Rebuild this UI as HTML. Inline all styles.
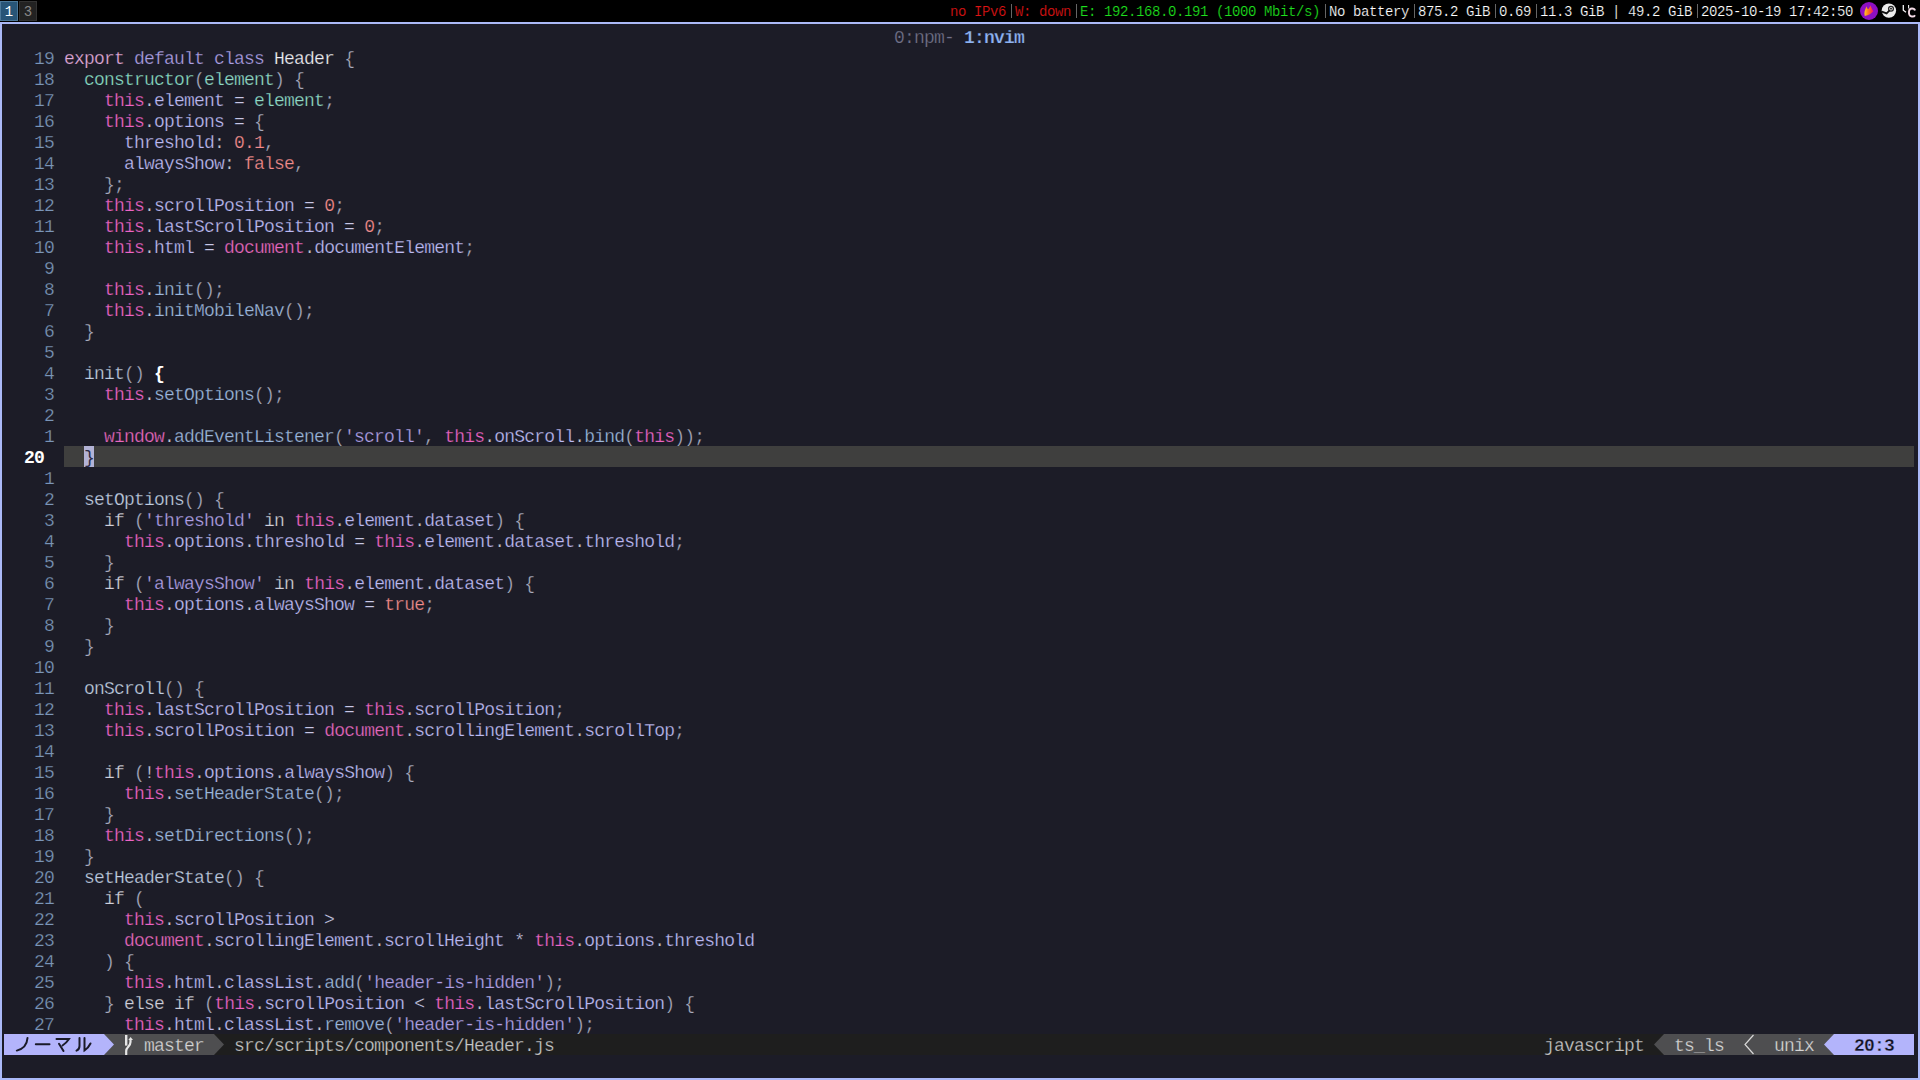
<!DOCTYPE html>
<html><head><meta charset="utf-8"><style>
html,body{margin:0;padding:0;width:1920px;height:1080px;overflow:hidden;background:#000;}
*{box-sizing:border-box;}
#bar{position:absolute;left:0;top:0;width:1920px;height:22px;background:#000;}
.ws{position:absolute;top:1px;height:20px;width:18px;border:1px solid;font:14px "Liberation Mono",monospace;line-height:20px;text-align:center;}
.sb{position:absolute;top:1px;height:22px;-webkit-text-stroke:0.2px #000;font:14px "Liberation Mono",monospace;letter-spacing:-0.4px;line-height:22px;white-space:pre;}
.sep{position:absolute;top:4px;width:1px;height:14px;background:#666;}
#term{position:absolute;left:0;top:22px;width:1920px;height:1058px;border:2px solid #abb9f7;background:#1c1c27;}
.r{position:absolute;left:4px;height:21px;width:1910px;font:18px "Liberation Mono",monospace;letter-spacing:-0.8px;line-height:21px;white-space:pre;color:#c8c8d8;}
.t{padding-top:2px;}
.ts{-webkit-text-stroke:0.25px #1c1c27;}
.ln{color:#7a95b8}
.export{color:#e2aadc}
.kw2{color:#ab9fe4}
.ty{color:#f0f0f6}
.pu{color:#a8abbe}
.dot{color:#c8c8d2}
.fn{color:#88dbc4}
.pa{color:#8edac6}
.th{color:#ec64c6}
.pr{color:#bcbaf4}
.op{color:#c8c8e6}
.nu{color:#f48c8c}
.gl{color:#e868c0}
.mc{color:#9bb6dc}
.md{color:#bfcce0}
.kw{color:#cfcfda}
.st{color:#b0a0e8}
.bold{color:#ffffff;font-weight:bold;-webkit-text-stroke:0}
.cur{position:absolute;left:64px;width:1850px;height:21px;background:#3f3f3e;}
.cursor{color:#2a2a48}
.lnum{position:absolute;left:4px;height:21px;font:18px "Liberation Mono",monospace;letter-spacing:-0.8px;line-height:21px;white-space:pre;}
</style></head><body>
<div id="bar"><div class="ws" style="left:0;background:#285577;border-color:#4c7899;color:#fff">1</div><div class="ws" style="left:19px;background:#222;border-color:#333;color:#888">3</div><div class="sb" style="left:950px;color:#e01414">no IPv6</div><div class="sep" style="left:1011px"></div><div class="sb" style="left:1015px;color:#e01414">W: down</div><div class="sep" style="left:1076px"></div><div class="sb" style="left:1080px;color:#1ee01e">E: 192.168.0.191 (1000 Mbit/s)</div><div class="sep" style="left:1325px"></div><div class="sb" style="left:1329px;color:#fff">No battery</div><div class="sep" style="left:1414px"></div><div class="sb" style="left:1418px;color:#fff">875.2 GiB</div><div class="sep" style="left:1495px"></div><div class="sb" style="left:1499px;color:#fff">0.69</div><div class="sep" style="left:1536px"></div><div class="sb" style="left:1540px;color:#fff">11.3 GiB | 49.2 GiB</div><div class="sep" style="left:1697px"></div><div class="sb" style="left:1701px;color:#fff">2025-10-19 17:42:50</div><svg style="position:absolute;left:1858px;top:0" width="62" height="22" viewBox="1858 0 62 22">
<defs><linearGradient id="fl" x1="0" y1="0" x2="1" y2="0"><stop offset="0" stop-color="#ffcc22"/><stop offset="0.45" stop-color="#ff7420"/><stop offset="1" stop-color="#f8106a"/></linearGradient></defs>
<circle cx="1869" cy="11" r="9" fill="#8d0fc2"/>
<path d="M1864.8,16 C1863.8,13 1864.8,10 1866.6,6.3 C1867,8 1867.5,9 1868.3,9.3 C1869,8 1869.8,6.5 1870.6,5.4 C1871.2,7.5 1872,9 1873.4,11.2 C1871.5,13.5 1868.5,15 1864.8,16 Z" fill="url(#fl)"/>
<circle cx="1888.9" cy="10.6" r="7.2" fill="#ececec"/>
<circle cx="1891" cy="8.7" r="2.4" fill="#ececec" stroke="#2a2a2a" stroke-width="1.3"/>
<circle cx="1891" cy="8.7" r="0.9" fill="#111"/>
<path d="M1881.8,11.6 L1886.6,13.4 L1889.6,10.4" stroke="#111" stroke-width="1.7" fill="none"/>
<path d="M1903.3,5 L1903.3,10.2 L1906,12.2" stroke="#f6f6f6" stroke-width="1.3" fill="none"/>
<path d="M1908.6,5 L1908.6,8.5" stroke="#f0f0f0" stroke-width="1.1" fill="none"/>
<path d="M1915,10.5 C1914.5,8.3 1909.5,7.2 1909,11.5 L1909,13.5 C1909.5,17.5 1914,17 1915,15.2" stroke="#f4dbe6" stroke-width="1.9" fill="none"/>
</svg></div><div id="term"></div><div class="r t" style="top:26px;left:894px;width:auto;-webkit-text-stroke:0.25px #1c1c27"><span style="color:#72728a">0:npm-</span> <span style="color:#8db2f2;font-weight:bold">1:nvim</span></div><div class="lnum t ts" style="top:47px;left:34px;color:#7a95b8">19</div><div class="r t ts" style="top:47px;left:64px;width:auto"><span class="export">export</span> <span class="kw2">default</span> <span class="kw2">class</span> <span class="ty">Header</span> <span class="pu">{</span></div><div class="lnum t ts" style="top:68px;left:34px;color:#7a95b8">18</div><div class="r t ts" style="top:68px;left:64px;width:auto">  <span class="fn">constructor</span><span class="pu">(</span><span class="pa">element</span><span class="pu">)</span> <span class="pu">{</span></div><div class="lnum t ts" style="top:89px;left:34px;color:#7a95b8">17</div><div class="r t ts" style="top:89px;left:64px;width:auto">    <span class="th">this</span><span class="dot">.</span><span class="pr">element</span> <span class="op">=</span> <span class="pa">element</span><span class="pu">;</span></div><div class="lnum t ts" style="top:110px;left:34px;color:#7a95b8">16</div><div class="r t ts" style="top:110px;left:64px;width:auto">    <span class="th">this</span><span class="dot">.</span><span class="pr">options</span> <span class="op">=</span> <span class="pu">{</span></div><div class="lnum t ts" style="top:131px;left:34px;color:#7a95b8">15</div><div class="r t ts" style="top:131px;left:64px;width:auto">      <span class="pr">threshold</span><span class="dot">:</span> <span class="nu">0.1</span><span class="pu">,</span></div><div class="lnum t ts" style="top:152px;left:34px;color:#7a95b8">14</div><div class="r t ts" style="top:152px;left:64px;width:auto">      <span class="pr">alwaysShow</span><span class="dot">:</span> <span class="nu">false</span><span class="pu">,</span></div><div class="lnum t ts" style="top:173px;left:34px;color:#7a95b8">13</div><div class="r t ts" style="top:173px;left:64px;width:auto">    <span class="pu">};</span></div><div class="lnum t ts" style="top:194px;left:34px;color:#7a95b8">12</div><div class="r t ts" style="top:194px;left:64px;width:auto">    <span class="th">this</span><span class="dot">.</span><span class="pr">scrollPosition</span> <span class="op">=</span> <span class="nu">0</span><span class="pu">;</span></div><div class="lnum t ts" style="top:215px;left:34px;color:#7a95b8">11</div><div class="r t ts" style="top:215px;left:64px;width:auto">    <span class="th">this</span><span class="dot">.</span><span class="pr">lastScrollPosition</span> <span class="op">=</span> <span class="nu">0</span><span class="pu">;</span></div><div class="lnum t ts" style="top:236px;left:34px;color:#7a95b8">10</div><div class="r t ts" style="top:236px;left:64px;width:auto">    <span class="th">this</span><span class="dot">.</span><span class="pr">html</span> <span class="op">=</span> <span class="gl">document</span><span class="dot">.</span><span class="pr">documentElement</span><span class="pu">;</span></div><div class="lnum t ts" style="top:257px;left:44px;color:#7a95b8">9</div><div class="r t ts" style="top:257px;left:64px;width:auto"></div><div class="lnum t ts" style="top:278px;left:44px;color:#7a95b8">8</div><div class="r t ts" style="top:278px;left:64px;width:auto">    <span class="th">this</span><span class="dot">.</span><span class="mc">init</span><span class="pu">();</span></div><div class="lnum t ts" style="top:299px;left:44px;color:#7a95b8">7</div><div class="r t ts" style="top:299px;left:64px;width:auto">    <span class="th">this</span><span class="dot">.</span><span class="mc">initMobileNav</span><span class="pu">();</span></div><div class="lnum t ts" style="top:320px;left:44px;color:#7a95b8">6</div><div class="r t ts" style="top:320px;left:64px;width:auto">  <span class="pu">}</span></div><div class="lnum t ts" style="top:341px;left:44px;color:#7a95b8">5</div><div class="r t ts" style="top:341px;left:64px;width:auto"></div><div class="lnum t ts" style="top:362px;left:44px;color:#7a95b8">4</div><div class="r t ts" style="top:362px;left:64px;width:auto">  <span class="md">init</span><span class="pu">()</span> <span class="bold">{</span></div><div class="lnum t ts" style="top:383px;left:44px;color:#7a95b8">3</div><div class="r t ts" style="top:383px;left:64px;width:auto">    <span class="th">this</span><span class="dot">.</span><span class="mc">setOptions</span><span class="pu">();</span></div><div class="lnum t ts" style="top:404px;left:44px;color:#7a95b8">2</div><div class="r t ts" style="top:404px;left:64px;width:auto"></div><div class="lnum t ts" style="top:425px;left:44px;color:#7a95b8">1</div><div class="r t ts" style="top:425px;left:64px;width:auto">    <span class="gl">window</span><span class="dot">.</span><span class="mc">addEventListener</span><span class="pu">(</span><span class="st">&#x27;scroll&#x27;</span><span class="pu">,</span> <span class="th">this</span><span class="dot">.</span><span class="pr">onScroll</span><span class="dot">.</span><span class="mc">bind</span><span class="pu">(</span><span class="th">this</span><span class="pu">));</span></div><div class="cur" style="top:446px"></div><div style="position:absolute;left:84px;top:446px;width:10px;height:21px;background:#b3b3d6"></div><div class="lnum t" style="top:446px;left:24px;color:#fff;font-weight:bold">20</div><div class="r t" style="top:446px;left:64px;width:auto">  <span class="cursor">}</span></div><div class="lnum t ts" style="top:467px;left:44px;color:#7a95b8">1</div><div class="r t ts" style="top:467px;left:64px;width:auto"></div><div class="lnum t ts" style="top:488px;left:44px;color:#7a95b8">2</div><div class="r t ts" style="top:488px;left:64px;width:auto">  <span class="md">setOptions</span><span class="pu">()</span> <span class="pu">{</span></div><div class="lnum t ts" style="top:509px;left:44px;color:#7a95b8">3</div><div class="r t ts" style="top:509px;left:64px;width:auto">    <span class="kw">if</span> <span class="pu">(</span><span class="st">&#x27;threshold&#x27;</span> <span class="kw">in</span> <span class="th">this</span><span class="dot">.</span><span class="pr">element</span><span class="dot">.</span><span class="pr">dataset</span><span class="pu">)</span> <span class="pu">{</span></div><div class="lnum t ts" style="top:530px;left:44px;color:#7a95b8">4</div><div class="r t ts" style="top:530px;left:64px;width:auto">      <span class="th">this</span><span class="dot">.</span><span class="pr">options</span><span class="dot">.</span><span class="pr">threshold</span> <span class="op">=</span> <span class="th">this</span><span class="dot">.</span><span class="pr">element</span><span class="dot">.</span><span class="pr">dataset</span><span class="dot">.</span><span class="pr">threshold</span><span class="pu">;</span></div><div class="lnum t ts" style="top:551px;left:44px;color:#7a95b8">5</div><div class="r t ts" style="top:551px;left:64px;width:auto">    <span class="pu">}</span></div><div class="lnum t ts" style="top:572px;left:44px;color:#7a95b8">6</div><div class="r t ts" style="top:572px;left:64px;width:auto">    <span class="kw">if</span> <span class="pu">(</span><span class="st">&#x27;alwaysShow&#x27;</span> <span class="kw">in</span> <span class="th">this</span><span class="dot">.</span><span class="pr">element</span><span class="dot">.</span><span class="pr">dataset</span><span class="pu">)</span> <span class="pu">{</span></div><div class="lnum t ts" style="top:593px;left:44px;color:#7a95b8">7</div><div class="r t ts" style="top:593px;left:64px;width:auto">      <span class="th">this</span><span class="dot">.</span><span class="pr">options</span><span class="dot">.</span><span class="pr">alwaysShow</span> <span class="op">=</span> <span class="nu">true</span><span class="pu">;</span></div><div class="lnum t ts" style="top:614px;left:44px;color:#7a95b8">8</div><div class="r t ts" style="top:614px;left:64px;width:auto">    <span class="pu">}</span></div><div class="lnum t ts" style="top:635px;left:44px;color:#7a95b8">9</div><div class="r t ts" style="top:635px;left:64px;width:auto">  <span class="pu">}</span></div><div class="lnum t ts" style="top:656px;left:34px;color:#7a95b8">10</div><div class="r t ts" style="top:656px;left:64px;width:auto"></div><div class="lnum t ts" style="top:677px;left:34px;color:#7a95b8">11</div><div class="r t ts" style="top:677px;left:64px;width:auto">  <span class="md">onScroll</span><span class="pu">()</span> <span class="pu">{</span></div><div class="lnum t ts" style="top:698px;left:34px;color:#7a95b8">12</div><div class="r t ts" style="top:698px;left:64px;width:auto">    <span class="th">this</span><span class="dot">.</span><span class="pr">lastScrollPosition</span> <span class="op">=</span> <span class="th">this</span><span class="dot">.</span><span class="pr">scrollPosition</span><span class="pu">;</span></div><div class="lnum t ts" style="top:719px;left:34px;color:#7a95b8">13</div><div class="r t ts" style="top:719px;left:64px;width:auto">    <span class="th">this</span><span class="dot">.</span><span class="pr">scrollPosition</span> <span class="op">=</span> <span class="gl">document</span><span class="dot">.</span><span class="pr">scrollingElement</span><span class="dot">.</span><span class="pr">scrollTop</span><span class="pu">;</span></div><div class="lnum t ts" style="top:740px;left:34px;color:#7a95b8">14</div><div class="r t ts" style="top:740px;left:64px;width:auto"></div><div class="lnum t ts" style="top:761px;left:34px;color:#7a95b8">15</div><div class="r t ts" style="top:761px;left:64px;width:auto">    <span class="kw">if</span> <span class="pu">(</span><span class="op">!</span><span class="th">this</span><span class="dot">.</span><span class="pr">options</span><span class="dot">.</span><span class="pr">alwaysShow</span><span class="pu">)</span> <span class="pu">{</span></div><div class="lnum t ts" style="top:782px;left:34px;color:#7a95b8">16</div><div class="r t ts" style="top:782px;left:64px;width:auto">      <span class="th">this</span><span class="dot">.</span><span class="mc">setHeaderState</span><span class="pu">();</span></div><div class="lnum t ts" style="top:803px;left:34px;color:#7a95b8">17</div><div class="r t ts" style="top:803px;left:64px;width:auto">    <span class="pu">}</span></div><div class="lnum t ts" style="top:824px;left:34px;color:#7a95b8">18</div><div class="r t ts" style="top:824px;left:64px;width:auto">    <span class="th">this</span><span class="dot">.</span><span class="mc">setDirections</span><span class="pu">();</span></div><div class="lnum t ts" style="top:845px;left:34px;color:#7a95b8">19</div><div class="r t ts" style="top:845px;left:64px;width:auto">  <span class="pu">}</span></div><div class="lnum t ts" style="top:866px;left:34px;color:#7a95b8">20</div><div class="r t ts" style="top:866px;left:64px;width:auto">  <span class="md">setHeaderState</span><span class="pu">()</span> <span class="pu">{</span></div><div class="lnum t ts" style="top:887px;left:34px;color:#7a95b8">21</div><div class="r t ts" style="top:887px;left:64px;width:auto">    <span class="kw">if</span> <span class="pu">(</span></div><div class="lnum t ts" style="top:908px;left:34px;color:#7a95b8">22</div><div class="r t ts" style="top:908px;left:64px;width:auto">      <span class="th">this</span><span class="dot">.</span><span class="pr">scrollPosition</span> <span class="op">&gt;</span></div><div class="lnum t ts" style="top:929px;left:34px;color:#7a95b8">23</div><div class="r t ts" style="top:929px;left:64px;width:auto">      <span class="gl">document</span><span class="dot">.</span><span class="pr">scrollingElement</span><span class="dot">.</span><span class="pr">scrollHeight</span> <span class="op">*</span> <span class="th">this</span><span class="dot">.</span><span class="pr">options</span><span class="dot">.</span><span class="pr">threshold</span></div><div class="lnum t ts" style="top:950px;left:34px;color:#7a95b8">24</div><div class="r t ts" style="top:950px;left:64px;width:auto">    <span class="pu">) {</span></div><div class="lnum t ts" style="top:971px;left:34px;color:#7a95b8">25</div><div class="r t ts" style="top:971px;left:64px;width:auto">      <span class="th">this</span><span class="dot">.</span><span class="pr">html</span><span class="dot">.</span><span class="pr">classList</span><span class="dot">.</span><span class="mc">add</span><span class="pu">(</span><span class="st">&#x27;header-is-hidden&#x27;</span><span class="pu">);</span></div><div class="lnum t ts" style="top:992px;left:34px;color:#7a95b8">26</div><div class="r t ts" style="top:992px;left:64px;width:auto">    <span class="pu">}</span> <span class="kw">else</span> <span class="kw">if</span> <span class="pu">(</span><span class="th">this</span><span class="dot">.</span><span class="pr">scrollPosition</span> <span class="op">&lt;</span> <span class="th">this</span><span class="dot">.</span><span class="pr">lastScrollPosition</span><span class="pu">)</span> <span class="pu">{</span></div><div class="lnum t ts" style="top:1013px;left:34px;color:#7a95b8">27</div><div class="r t ts" style="top:1013px;left:64px;width:auto">      <span class="th">this</span><span class="dot">.</span><span class="pr">html</span><span class="dot">.</span><span class="pr">classList</span><span class="dot">.</span><span class="mc">remove</span><span class="pu">(</span><span class="st">&#x27;header-is-hidden&#x27;</span><span class="pu">);</span></div><div style="position:absolute;left:4px;top:1034px;width:1910px;height:21px;background:#1e1e1e"></div><div style="position:absolute;left:4px;top:1034px;width:100px;height:21px;background:#b3b4fb"></div><div style="position:absolute;left:104px;top:1034px;width:110px;height:21px;background:#4e4e50"></div><svg style="position:absolute;left:0;top:1034px" width="240" height="21" viewBox="0 1034 240 21">
<path d="M104,1034 L114,1044.5 L104,1055 Z" fill="#b3b4fb"/>
<path d="M214,1034 L224,1044.5 L214,1055 Z" fill="#4e4e50"/>
<g stroke="#1a1a28" stroke-width="2" fill="none" stroke-linecap="round">
<path d="M27.5,1038 C27,1045 23,1049 16.8,1050.6"/>
<path d="M35.8,1044.3 L49.5,1044.3"/>
<path d="M56.5,1039 L69,1039 C67,1042 65,1044 62.5,1045.5"/>
<path d="M59,1043.8 L63.5,1051"/>
<path d="M79.5,1038 L79.5,1046 C79.5,1048.5 78,1050 76.5,1050.6"/>
<path d="M84.5,1038 L84.5,1050.5 C87,1049 89,1046.5 90.5,1043.5"/>
</g>
<rect x="125" y="1035" width="2.4" height="10.6" fill="#e6e6e6"/>
<path d="M126.2,1055 L126.2,1051 C126.2,1047 130.5,1046.5 130.5,1042 L130.5,1039" stroke="#e6e6e6" stroke-width="2.2" fill="none"/>
<path d="M128.3,1040 L130.6,1037 L133,1040 Z" fill="#e6e6e6"/>
</svg><div class="r t" style="top:1034px;left:144px;width:auto;color:#d6d6d6;-webkit-text-stroke:0.25px #4e4e50">master</div><div class="r t" style="top:1034px;left:234px;width:auto;color:#c6c6c6;-webkit-text-stroke:0.25px #1e1e1e">src/scripts/components/Header.js</div><div class="r t" style="top:1034px;left:1544px;width:auto;color:#c6c6c6;-webkit-text-stroke:0.25px #1e1e1e">javascript</div><div style="position:absolute;left:1664px;top:1034px;width:170px;height:21px;background:#4e4e50"></div><div style="position:absolute;left:1834px;top:1034px;width:80px;height:21px;background:#b3b4fb"></div><svg style="position:absolute;left:1640px;top:1034px" width="200" height="21" viewBox="1640 1034 200 21">
<path d="M1664,1034 L1654,1044.5 L1664,1055 Z" fill="#4e4e50"/>
<path d="M1834,1034 L1824,1044.5 L1834,1055 Z" fill="#b3b4fb"/>
<path d="M1753.5,1035 L1745,1044.5 L1753.5,1054" stroke="#d8d8d8" stroke-width="1.2" fill="none"/>
</svg><div class="r t" style="top:1034px;left:1674px;width:auto;color:#d6d6d6;-webkit-text-stroke:0.25px #4e4e50">ts_ls</div><div class="r t" style="top:1034px;left:1774px;width:auto;color:#d6d6d6;-webkit-text-stroke:0.25px #4e4e50">unix</div><div class="r t" style="top:1034px;left:1854px;width:auto;color:#141420;font-weight:bold;-webkit-text-stroke:0.3px #b3b4fb">20:3</div></body></html>
